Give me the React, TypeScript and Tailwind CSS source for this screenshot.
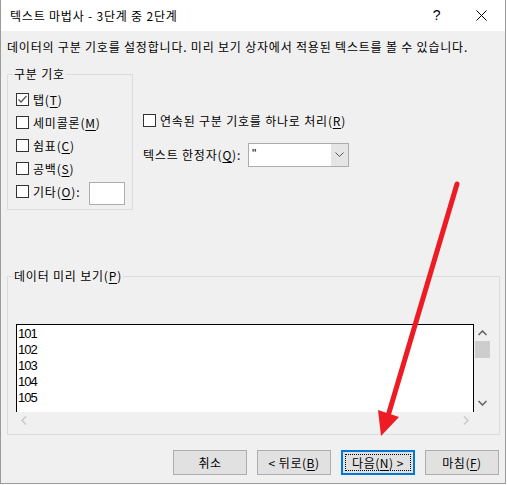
import React from "react";

const KR = { fontFamily: '"Noto Sans CJK KR", "Noto Sans", sans-serif' };

function U({ c }: { c: string }) {
  return (
    <>
      (<span className="underline underline-offset-2">{c}</span>)
    </>
  );
}

function Box({ checked = false }: { checked?: boolean }) {
  return (
    <div className="w-[13px] h-[13px] border border-[#333333] bg-white flex items-center justify-center shrink-0">
      {checked && (
        <svg width="11" height="11" viewBox="0 0 11 11">
          <polyline points="1.5,5.5 4,8 9.5,2" fill="none" stroke="#555" strokeWidth="1.3" />
        </svg>
      )}
    </div>
  );
}

function Btn({ children, focus = false }: { children: React.ReactNode; focus?: boolean }) {
  return (
    <div
      className={
        "w-[74px] h-[25px] bg-[#e1e1e1] flex items-center justify-center text-[12px] text-black tracking-[0.5px] " +
        (focus ? "border-2 border-[#0078d7]" : "border border-[#adadad]")
      }
    >
      {focus ? (
        <div className="w-[66px] h-[17px] border border-dotted border-black flex items-center justify-center">
          {children}
        </div>
      ) : (
        children
      )}
    </div>
  );
}

export default function App() {
  return (
    <div className="relative w-[506px] h-[484px] bg-[#f0f0f0] border-l border-r border-b border-[#9a9a9a] overflow-hidden tracking-[0.8px]" style={KR}>
      {/* Title bar */}
      <div className="h-[31px] bg-white flex items-center pl-[9px] text-[12px] text-black">
        <span className="flex-1 whitespace-nowrap">텍스트 마법사 - 3단계 중 2단계</span>
        <span className="w-[20px] text-center text-[14px] mr-[29px]" style={{ fontFamily: '"Liberation Sans", sans-serif' }}>?</span>
        <svg width="11" height="11" viewBox="0 0 11 11" className="mr-[18px]">
          <line x1="0.5" y1="0.5" x2="10.5" y2="10.5" stroke="#000" strokeWidth="1" />
          <line x1="10.5" y1="0.5" x2="0.5" y2="10.5" stroke="#000" strokeWidth="1" />
        </svg>
      </div>

      {/* Body */}
      <div className="pl-[6px] pr-[6px] text-[12px] text-black">
        <div className="h-[15px] leading-[15px] mt-[8px] whitespace-nowrap">데이터의 구분 기호를 설정합니다. 미리 보기 상자에서 적용된 텍스트를 볼 수 있습니다.</div>

        <div className="flex mt-[20px]">
          {/* 구분 기호 group */}
          <div className="relative w-[126px] h-[136px] border border-[#dcdcdc] pt-[13px] pl-[8px]">
            <span className="absolute -top-[9px] left-[5px] px-[1px] bg-[#f0f0f0] leading-[16px] whitespace-nowrap">구분 기호</span>
            <div className="h-[23px] flex items-center gap-[4px]"><Box checked /><span>탭<U c="T" /></span></div>
            <div className="h-[23px] flex items-center gap-[4px]"><Box /><span className="whitespace-nowrap">세미콜론<U c="M" /></span></div>
            <div className="h-[23px] flex items-center gap-[4px]"><Box /><span>쉼표<U c="C" /></span></div>
            <div className="h-[23px] flex items-center gap-[4px]"><Box /><span>공백<U c="S" /></span></div>
            <div className="h-[23px] flex items-center gap-[4px]">
              <Box />
              <span className="w-[52px] whitespace-nowrap">기타<U c="O" />:</span>
              <div className="mt-[4px] w-[36px] h-[23px] bg-white border border-[#adadad] shrink-0" />
            </div>
          </div>

          {/* right column */}
          <div className="ml-[10px] flex flex-col">
            <div className="mt-[40px] h-[13px] flex items-center gap-[4px]">
              <Box />
              <span className="whitespace-nowrap">연속된 구분 기호를 하나로 처리<U c="R" /></span>
            </div>
            <div className="mt-[16px] h-[24px] flex items-center">
              <span className="w-[105px] whitespace-nowrap">텍스트 한정자<U c="Q" />:</span>
              <div className="w-[101px] h-[24px] border border-[#adadad] bg-white flex">
                <span className="flex-1 pl-[3px] leading-[20px]" style={{ fontFamily: '"Liberation Sans", sans-serif' }}>"</span>
                <div className="w-[17px] h-full bg-[#e5e5e5] flex items-center justify-center">
                  <svg width="9" height="6" viewBox="0 0 9 6">
                    <polyline points="0.5,0.5 4.5,4.5 8.5,0.5" fill="none" stroke="#555" strokeWidth="1" />
                  </svg>
                </div>
              </div>
            </div>
          </div>
        </div>

        {/* 데이터 미리 보기 */}
        <div className="relative mt-[66px] w-[493px] h-[159px] border border-[#dcdcdc] pt-[47px] pl-[8px]">
          <span className="absolute -top-[9px] left-[5px] px-[1px] bg-[#f0f0f0] leading-[16px] whitespace-nowrap">데이터 미리 보기<U c="P" /></span>
          <div className="w-[475px] h-[105px] flex flex-col">
            <div className="flex h-[88px]">
              <div
                className="w-[458px] h-[88px] bg-white border-l border-t border-r border-black pl-[1px] pt-[1px] text-[13px] leading-[16px] tracking-[-1px]"
                style={{ fontFamily: '"Liberation Sans", sans-serif' }}
              >
                <div>101</div>
                <div>102</div>
                <div>103</div>
                <div>104</div>
                <div>105</div>
              </div>
              <div className="w-[17px] h-[88px] flex flex-col items-center">
                <svg width="9" height="6" viewBox="0 0 9 6" className="mt-[6px]">
                  <polyline points="0.5,5 4.5,1 8.5,5" fill="none" stroke="#606060" strokeWidth="1.5" />
                </svg>
                <div className="mt-[5px] w-[15px] h-[17px] bg-[#cdcdcd]" />
                <div className="flex-1" />
                <svg width="9" height="6" viewBox="0 0 9 6" className="mb-[6px]">
                  <polyline points="0.5,1 4.5,5 8.5,1" fill="none" stroke="#606060" strokeWidth="1.5" />
                </svg>
              </div>
            </div>
            <div className="h-[17px] w-[458px] flex items-center justify-between px-[5px]">
              <svg width="6" height="9" viewBox="0 0 6 9">
                <polyline points="5,0.5 1,4.5 5,8.5" fill="none" stroke="#c8c8c8" strokeWidth="1.5" />
              </svg>
              <svg width="6" height="9" viewBox="0 0 6 9">
                <polyline points="1,0.5 5,4.5 1,8.5" fill="none" stroke="#c8c8c8" strokeWidth="1.5" />
              </svg>
            </div>
          </div>
        </div>

        {/* Buttons */}
        <div className="mt-[15px] flex justify-end gap-[10px]">
          <Btn>취소</Btn>
          <Btn>&lt; 뒤로<U c="B" /></Btn>
          <Btn focus>다음<U c="N" /> &gt;</Btn>
          <Btn>마침<U c="F" /></Btn>
        </div>
      </div>

      {/* Red arrow annotation */}
      <svg className="absolute left-0 top-0 pointer-events-none" width="506" height="484" viewBox="0 0 506 484">
        <line x1="456" y1="184" x2="387" y2="416" stroke="#ed1c24" strokeWidth="5" strokeLinecap="round" />
        <polygon points="377,410 398,417 380,436" fill="#ed1c24" />
      </svg>
    </div>
  );
}
